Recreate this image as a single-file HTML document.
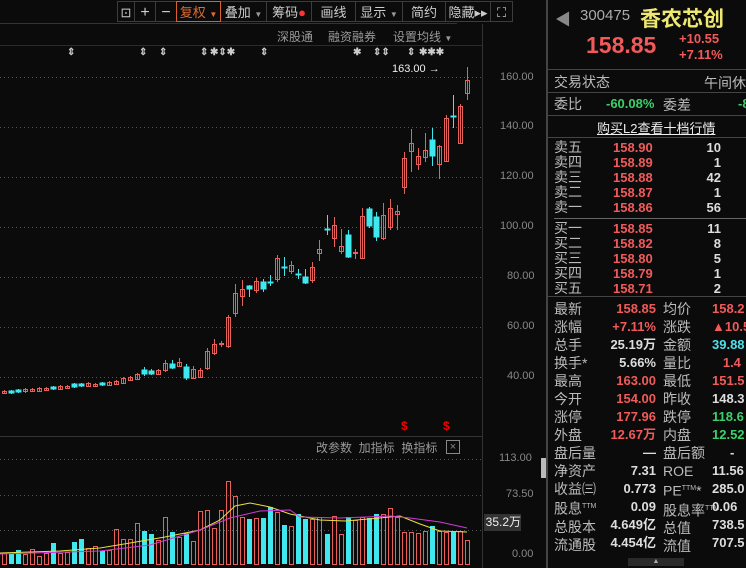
<!DOCTYPE html><html><head><meta charset="utf-8"><style>
body{margin:0;width:746px;height:568px;background:#0b0b0b;overflow:hidden;font-family:"Liberation Sans","Noto Sans CJK SC",sans-serif;color:#bbb;position:relative}
.a{position:absolute;white-space:nowrap}
.tb{position:absolute;top:1px;height:21px;border:1px solid #3c3c3c;border-left:none;font-size:13px;color:#ccc;line-height:21px;text-align:center;box-sizing:border-box}
.rp{position:absolute;left:547px;top:0;width:199px;height:568px;border-left:1px solid #444}
.row{position:absolute;left:6px;font-size:13px;color:#bbb;height:16px;line-height:16px}
.hl{position:absolute;left:0;width:199px;height:1px;background:#444}
.r{color:#f25a5a}.g{color:#3bd16a}.w{color:#ddd}.c{color:#4fe0ea}
</style></head><body>
<div class="tb" style="left:117px;width:18px;border-left:1px solid #3c3c3c">⊡</div>
<div class="tb" style="left:135px;width:21px;font-size:16px">+</div>
<div class="tb" style="left:156px;width:21px;font-size:16px">−</div>
<div class="tb" style="left:176px;width:45px;border:1px solid #d8622a;color:#e36a2e">复权 <span style="font-size:8px">▼</span></div>
<div class="tb" style="left:221px;width:46px">叠加 <span style="font-size:8px;color:#999">▼</span></div>
<div class="tb" style="left:267px;width:45px">筹码<span style="color:#f33">●</span></div>
<div class="tb" style="left:312px;width:44px">画线</div>
<div class="tb" style="left:356px;width:47px">显示 <span style="font-size:8px;color:#999">▼</span></div>
<div class="tb" style="left:403px;width:43px">简约</div>
<div class="tb" style="left:446px;width:45px">隐藏▸▸</div>
<div class="tb" style="left:491px;width:22px">⛶</div>
<div class="a" style="left:0;top:23px;width:457px;height:1px;background:#333"></div>
<div class="a" style="left:277px;top:28px;font-size:12px;color:#999">深股通</div>
<div class="a" style="left:328px;top:28px;font-size:12px;color:#999">融资融券</div>
<div class="a" style="left:393px;top:28px;font-size:12px;color:#999">设置均线 <span style="font-size:8px">▼</span></div>
<div class="a" style="left:0;top:45px;width:482px;height:1px;background:#2a2a2a"></div>
<div class="a" style="left:0;top:47px;font-size:10px;color:#ccc;font-weight:bold">
<span class="a" style="left:67px">⇕</span><span class="a" style="left:139px">⇕</span><span class="a" style="left:159px">⇕</span><span class="a" style="left:200px">⇕</span><span class="a" style="left:210px">✱⇕✱</span><span class="a" style="left:260px">⇕</span><span class="a" style="left:353px">✱</span><span class="a" style="left:373px">⇕⇕</span><span class="a" style="left:407px">⇕</span><span class="a" style="left:419px">✱✱✱</span></div>
<div class="a" style="left:392px;top:63px;font-size:11px;color:#eee">163.00 →</div>
<div class="a" style="left:482px;top:24px;width:1px;height:544px;background:#333"></div>
<div class="a" style="left:546px;top:0;width:1px;height:568px;background:#444"></div>
<div class="a" style="left:500px;top:70px;font-size:11px;color:#888;line-height:14px">160.00</div>
<div class="a" style="left:500px;top:120px;font-size:11px;color:#888">140.00</div>
<div class="a" style="left:500px;top:170px;font-size:11px;color:#888">120.00</div>
<div class="a" style="left:500px;top:220px;font-size:11px;color:#888">100.00</div>
<div class="a" style="left:507px;top:270px;font-size:11px;color:#888">80.00</div>
<div class="a" style="left:507px;top:320px;font-size:11px;color:#888">60.00</div>
<div class="a" style="left:507px;top:370px;font-size:11px;color:#888">40.00</div>
<div class="a" style="left:499px;top:452px;font-size:11px;color:#888">113.00</div>
<div class="a" style="left:506px;top:488px;font-size:11px;color:#888">73.50</div>
<div class="a" style="left:484px;top:514px;width:37px;height:17px;background:#333;font-size:12px;color:#eee;line-height:17px;text-align:right">35.2万</div>
<div class="a" style="left:512px;top:548px;font-size:11px;color:#888">0.00</div>
<div class="a" style="left:541px;top:458px;width:5px;height:20px;background:#bbb"></div>
<div class="a" style="left:0;top:436px;width:482px;height:1px;background:#333"></div>
<div class="a" style="left:401px;top:419px;font-size:12px;color:#e00;font-weight:bold">$</div>
<div class="a" style="left:443px;top:419px;font-size:12px;color:#e00;font-weight:bold">$</div>
<div class="a" style="left:316px;top:439px;font-size:12px;color:#999">改参数&nbsp; 加指标&nbsp; 换指标</div>
<div class="a" style="left:446px;top:440px;width:12px;height:12px;border:1px solid #888;color:#888;font-size:11px;line-height:12px;text-align:center">×</div>
<svg class="a" style="left:0;top:0" width="482" height="568">
<g stroke="#555" stroke-dasharray="1,3" stroke-width="1">
<line x1="0" y1="77.5" x2="482" y2="77.5"/><line x1="0" y1="127.5" x2="482" y2="127.5"/><line x1="0" y1="177.5" x2="482" y2="177.5"/><line x1="0" y1="227.5" x2="482" y2="227.5"/><line x1="0" y1="277.5" x2="482" y2="277.5"/><line x1="0" y1="327.5" x2="482" y2="327.5"/><line x1="0" y1="377.5" x2="482" y2="377.5"/>
<line x1="0" y1="459.5" x2="482" y2="459.5"/><line x1="0" y1="495.5" x2="482" y2="495.5"/><line x1="0" y1="530.5" x2="482" y2="530.5"/>
</g>
<line x1="467.5" y1="67" x2="467.5" y2="100" stroke="#e8605a"/>
<g fill="none" stroke="#e8605a" stroke-width="1">
<path d="M4.5 390V394M25.5 388V393M32.5 388V392M39.5 387V392M46.5 387V391M60.5 385V390M67.5 385V389M88.5 382V387M95.5 383V387M109.5 381V386M116.5 380V385M123.5 377V384M130.5 376V381M137.5 373V380M158.5 369V375M165.5 360V372M179.5 358V367M193.5 366V379M200.5 368V378M207.5 348V370M214.5 339V355M221.5 341V347M228.5 315V348M235.5 284V317M242.5 280V306M256.5 278V293M277.5 255V282M291.5 261V274M312.5 262V283M319.5 240V261M334.5 217V247M341.5 229V254M355.5 249V259M362.5 208V259M383.5 203V240M390.5 199V230M397.5 205V230M404.5 152V194M411.5 129V172M418.5 148V170M425.5 133V162M439.5 145V179M446.5 115V162M460.5 104V144"/>
<rect x="2.5" y="391.5" width="4" height="2"/><rect x="23.5" y="389.5" width="4" height="2"/><rect x="30.5" y="389.5" width="4" height="2"/><rect x="37.5" y="388.5" width="4" height="3"/><rect x="44.5" y="388.5" width="4" height="2"/><rect x="58.5" y="386.5" width="4" height="3"/><rect x="65.5" y="386.5" width="4" height="2"/><rect x="86.5" y="383.5" width="4" height="3"/><rect x="93.5" y="384.5" width="4" height="2"/><rect x="107.5" y="382.5" width="4" height="3"/><rect x="114.5" y="381.5" width="4" height="3"/><rect x="121.5" y="378.5" width="4" height="5"/><rect x="128.5" y="377.5" width="4" height="3"/><rect x="135.5" y="374.5" width="4" height="5"/><rect x="156.5" y="370.5" width="4" height="4"/><rect x="163.5" y="363.5" width="4" height="7"/><rect x="177.5" y="362.5" width="4" height="4"/><rect x="191.5" y="369.5" width="4" height="9"/><rect x="198.5" y="370.5" width="4" height="7"/><rect x="205.5" y="351.5" width="4" height="17"/><rect x="212.5" y="344.5" width="4" height="9"/><rect x="219.5" y="343.5" width="4" height="1"/><rect x="226.5" y="317.5" width="4" height="29"/><rect x="233.5" y="293.5" width="4" height="20"/><rect x="240.5" y="289.5" width="4" height="7"/><rect x="254.5" y="281.5" width="4" height="9"/><rect x="275.5" y="258.5" width="4" height="21"/><rect x="289.5" y="265.5" width="4" height="6"/><rect x="310.5" y="267.5" width="4" height="13"/><rect x="317.5" y="249.5" width="4" height="4"/><rect x="332.5" y="225.5" width="4" height="13"/><rect x="339.5" y="246.5" width="4" height="5"/><rect x="353.5" y="252.5" width="4" height="1"/><rect x="360.5" y="216.5" width="4" height="42"/><rect x="381.5" y="215.5" width="4" height="23"/><rect x="388.5" y="208.5" width="4" height="19"/><rect x="395.5" y="211.5" width="4" height="3"/><rect x="402.5" y="158.5" width="4" height="29"/><rect x="409.5" y="143.5" width="4" height="8"/><rect x="416.5" y="156.5" width="4" height="8"/><rect x="423.5" y="150.5" width="4" height="7"/><rect x="437.5" y="146.5" width="4" height="18"/><rect x="444.5" y="118.5" width="4" height="43"/><rect x="458.5" y="106.5" width="4" height="37"/><rect x="465.5" y="80.5" width="4" height="13"/>
</g>
<g stroke="#3ee8ee" fill="#3ee8ee">
<path d="M11.5 390V394M18.5 389V393M53.5 386V390M74.5 383V388M81.5 383V387M102.5 382V386M144.5 367V376M151.5 369V375M172.5 360V369M186.5 364V380M249.5 285V297M263.5 279V292M270.5 275V286M284.5 257V276M298.5 269V279M305.5 269V284M327.5 215V235M348.5 230V258M369.5 207V228M376.5 212V241M432.5 128V166M453.5 95V128" fill="none"/>
<rect x="9" y="391" width="5" height="2"/><rect x="16" y="390" width="5" height="2"/><rect x="51" y="387" width="5" height="2"/><rect x="72" y="384" width="5" height="3"/><rect x="79" y="384" width="5" height="2"/><rect x="100" y="383" width="5" height="2"/><rect x="142" y="370" width="5" height="4"/><rect x="149" y="371" width="5" height="3"/><rect x="170" y="364" width="5" height="4"/><rect x="184" y="367" width="5" height="11"/><rect x="247" y="286" width="5" height="3"/><rect x="261" y="282" width="5" height="7"/><rect x="268" y="282" width="5" height="1"/><rect x="282" y="267" width="5" height="1"/><rect x="296" y="274" width="5" height="1"/><rect x="303" y="277" width="5" height="6"/><rect x="325" y="229" width="5" height="1"/><rect x="346" y="235" width="5" height="22"/><rect x="367" y="209" width="5" height="17"/><rect x="374" y="217" width="5" height="20"/><rect x="430" y="140" width="5" height="16"/><rect x="451" y="116" width="5" height="1"/>
</g>
<g fill="none" stroke="#e8605a">
<rect x="2.5" y="553.5" width="4" height="11"/><rect x="23.5" y="554.5" width="4" height="10"/><rect x="30.5" y="549.5" width="4" height="15"/><rect x="37.5" y="556.5" width="4" height="8"/><rect x="44.5" y="553.5" width="4" height="11"/><rect x="58.5" y="553.5" width="4" height="11"/><rect x="65.5" y="552.5" width="4" height="12"/><rect x="86.5" y="548.5" width="4" height="16"/><rect x="93.5" y="546.5" width="4" height="18"/><rect x="107.5" y="550.5" width="4" height="14"/><rect x="114.5" y="529.5" width="4" height="35"/><rect x="121.5" y="539.5" width="4" height="25"/><rect x="128.5" y="539.5" width="4" height="25"/><rect x="135.5" y="523.5" width="4" height="41"/><rect x="156.5" y="540.5" width="4" height="24"/><rect x="163.5" y="517.5" width="4" height="47"/><rect x="177.5" y="537.5" width="4" height="27"/><rect x="191.5" y="541.5" width="4" height="23"/><rect x="198.5" y="511.5" width="4" height="53"/><rect x="205.5" y="510.5" width="4" height="54"/><rect x="212.5" y="528.5" width="4" height="36"/><rect x="219.5" y="510.5" width="4" height="54"/><rect x="226.5" y="481.5" width="4" height="83"/><rect x="233.5" y="496.5" width="4" height="68"/><rect x="240.5" y="517.5" width="4" height="47"/><rect x="254.5" y="518.5" width="4" height="46"/><rect x="275.5" y="512.5" width="4" height="52"/><rect x="289.5" y="526.5" width="4" height="38"/><rect x="310.5" y="519.5" width="4" height="45"/><rect x="317.5" y="517.5" width="4" height="47"/><rect x="332.5" y="516.5" width="4" height="48"/><rect x="339.5" y="534.5" width="4" height="30"/><rect x="353.5" y="520.5" width="4" height="44"/><rect x="360.5" y="517.5" width="4" height="47"/><rect x="381.5" y="514.5" width="4" height="50"/><rect x="388.5" y="508.5" width="4" height="56"/><rect x="395.5" y="517.5" width="4" height="47"/><rect x="402.5" y="532.5" width="4" height="32"/><rect x="409.5" y="532.5" width="4" height="32"/><rect x="416.5" y="533.5" width="4" height="31"/><rect x="423.5" y="531.5" width="4" height="33"/><rect x="437.5" y="531.5" width="4" height="33"/><rect x="444.5" y="532.5" width="4" height="32"/><rect x="458.5" y="531.5" width="4" height="33"/><rect x="465.5" y="540.5" width="4" height="24"/>
</g>
<g fill="#3ee8ee">
<rect x="9" y="554" width="5" height="10"/><rect x="16" y="550" width="5" height="14"/><rect x="51" y="543" width="5" height="21"/><rect x="72" y="542" width="5" height="22"/><rect x="79" y="539" width="5" height="25"/><rect x="100" y="551" width="5" height="13"/><rect x="142" y="531" width="5" height="33"/><rect x="149" y="534" width="5" height="30"/><rect x="170" y="532" width="5" height="32"/><rect x="184" y="533" width="5" height="31"/><rect x="247" y="519" width="5" height="45"/><rect x="261" y="518" width="5" height="46"/><rect x="268" y="507" width="5" height="57"/><rect x="282" y="525" width="5" height="39"/><rect x="296" y="514" width="5" height="50"/><rect x="303" y="519" width="5" height="45"/><rect x="325" y="534" width="5" height="30"/><rect x="346" y="517" width="5" height="47"/><rect x="367" y="518" width="5" height="46"/><rect x="374" y="514" width="5" height="50"/><rect x="430" y="526" width="5" height="38"/><rect x="451" y="532" width="5" height="32"/>
</g>
<polyline fill="none" stroke="#e8e040" points="0,553 60,551 100,548 130,543 165,537 200,530 220,520 235,506 250,503 270,507 290,514 320,520 345,521 380,518 400,516 420,524 440,531 467,532"/>
<polyline fill="none" stroke="#d23ad8" points="0,554 100,551 150,545 200,530 230,518 260,511 290,510 300,517 340,518 390,516 410,518 440,522 467,528"/>
</svg>
<div class="rp">
<div class="a" style="left:7px;top:6px;font-size:16px;color:#888">◀</div>
<div class="a" style="left:32px;top:7px;font-size:15px;color:#aaa">300475</div>
<div class="a" style="left:92px;top:3px;font-size:21px;color:#eee870;font-weight:bold">香农芯创</div>
<div class="a r" style="left:38px;top:32px;font-size:23px;font-weight:bold">158.85</div>
<div class="a r" style="left:131px;top:31px;font-size:13px;font-weight:bold">+10.55</div>
<div class="a r" style="left:131px;top:47px;font-size:13px;font-weight:bold">+7.11%</div>
<div class="hl" style="top:69px"></div>
<div class="row" style="top:74px;font-size:14px">交易状态</div><div class="a" style="left:156px;top:73px;font-size:14px;color:#bbb">午间休市</div>
<div class="hl" style="top:92px"></div>
<div class="row" style="top:96px;font-size:14px">委比</div><div class="a g" style="left:58px;top:96px;font-size:13px;font-weight:bold">-60.08%</div><div class="a" style="left:115px;top:95px;font-size:14px">委差</div><div class="a g" style="left:190px;top:96px;font-size:13px;font-weight:bold">-8</div>
<div class="hl" style="top:115px"></div>
<div class="a" style="left:49px;top:118px;font-size:13px;color:#eee;text-decoration:underline">购买L2查看十档行情</div>
<div class="hl" style="top:137px"></div>
<div style="position:absolute;left:0;top:140px;width:199px;font-size:14px;line-height:15px">
<div class="a" style="left:6px;top:0">卖五<br>卖四<br>卖三<br>卖二<br>卖一</div>
<div class="a r" style="left:65px;top:0;font-weight:bold;font-size:13px">158.90<br>158.89<br>158.88<br>158.87<br>158.86</div>
<div class="a w" style="left:125px;width:48px;text-align:right;top:0;font-weight:bold;font-size:13px">10<br>1<br>42<br>1<br>56</div>
</div>
<div class="a" style="left:6px;top:218px;width:193px;height:1px;background:#666"></div>
<div style="position:absolute;left:0;top:221px;width:199px;font-size:14px;line-height:15px">
<div class="a" style="left:6px;top:0">买一<br>买二<br>买三<br>买四<br>买五</div>
<div class="a r" style="left:65px;top:0;font-weight:bold;font-size:13px">158.85<br>158.82<br>158.80<br>158.79<br>158.71</div>
<div class="a w" style="left:125px;width:48px;text-align:right;top:0;font-weight:bold;font-size:13px">11<br>8<br>5<br>1<br>2</div>
</div>
<div class="hl" style="top:296px"></div>
<div style="position:absolute;left:0;top:300px;width:199px;font-size:14px;line-height:18px">
<div class="a" style="left:6px;top:0;color:#bbb">最新<br>涨幅<br>总手<br>换手*<br>最高<br>今开<br>涨停<br>外盘<br>盘后量<br>净资产<br>收益㈢<br>股息<sup style="font-size:7px">TTM</sup><br>总股本<br>流通股</div>
<div class="a" style="left:20px;width:88px;top:0;text-align:right;font-weight:bold;font-size:13px"><span class="r">158.85</span><br><span class="r">+7.11%</span><br><span class="w">25.19万</span><br><span class="w">5.66%</span><br><span class="r">163.00</span><br><span class="r">154.00</span><br><span class="r">177.96</span><br><span class="r">12.67万</span><br><span class="w">—</span><br><span class="w">7.31</span><br><span class="w">0.773</span><br><span class="w">0.09</span><br><span class="w">4.649亿</span><br><span class="w">4.454亿</span></div>
<div class="a" style="left:115px;top:0;color:#bbb">均价<br>涨跌<br>金额<br>量比<br>最低<br>昨收<br>跌停<br>内盘<br>盘后额<br>ROE<br>PE<sup style="font-size:7px">TTM</sup>*<br>股息率<sup style="font-size:7px">TTM</sup><br>总值<br>流值</div>
<div class="a" style="left:164px;top:0;font-weight:bold;font-size:13px"><span class="r">158.2</span><br><span class="r">▲10.5</span><br><span class="c">39.88</span><br><span class="r">&nbsp;&nbsp;&nbsp;1.4</span><br><span class="r">151.5</span><br><span class="w">148.3</span><br><span class="g">118.6</span><br><span class="g">12.52</span><br><span class="w">&nbsp;&nbsp;&nbsp;&nbsp;&nbsp;-</span><br><span class="w">11.56</span><br><span class="w">285.0</span><br><span class="w">0.06</span><br><span class="w">738.5</span><br><span class="w">707.5</span></div>
</div>
<div class="a" style="left:80px;top:558px;width:56px;height:8px;background:#2a2a2a;font-size:7px;color:#aaa;text-align:center;line-height:8px">▲</div>
</div>
</body></html>
